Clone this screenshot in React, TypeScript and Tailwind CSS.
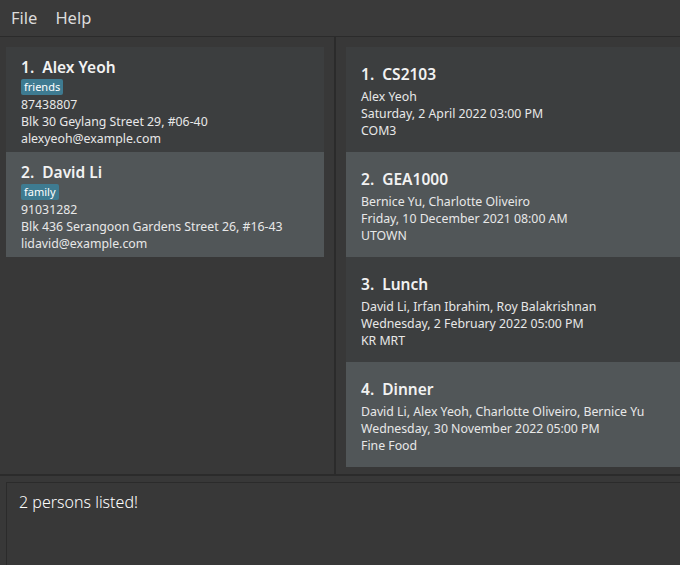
const persons = [
  {
    name: 'Alex Yeoh',
    tag: 'friends',
    phone: '87438807',
    address: 'Blk 30 Geylang Street 29, #06-40',
    email: 'alexyeoh@example.com',
  },
  {
    name: 'David Li',
    tag: 'family',
    phone: '91031282',
    address: 'Blk 436 Serangoon Gardens Street 26, #16-43',
    email: 'lidavid@example.com',
  },
];

const meetings = [
  {
    title: 'CS2103',
    people: 'Alex Yeoh',
    when: 'Saturday, 2 April 2022 03:00 PM',
    where: 'COM3',
  },
  {
    title: 'GEA1000',
    people: 'Bernice Yu, Charlotte Oliveiro',
    when: 'Friday, 10 December 2021 08:00 AM',
    where: 'UTOWN',
  },
  {
    title: 'Lunch',
    people: 'David Li, Irfan Ibrahim, Roy Balakrishnan',
    when: 'Wednesday, 2 February 2022 05:00 PM',
    where: 'KR MRT',
  },
  {
    title: 'Dinner',
    people: 'David Li, Alex Yeoh, Charlotte Oliveiro, Bernice Yu',
    when: 'Wednesday, 30 November 2022 05:00 PM',
    where: 'Fine Food',
  },
];

function PersonCard({ p, index }: { p: (typeof persons)[number]; index: number }) {
  const bg = index % 2 === 0 ? 'bg-[#3c3e3f]' : 'bg-[#515658]';
  return (
    <div className={`${bg} h-[105px] pl-[15px] pt-[9px]`}>
      <div className="text-[15.5px] leading-[22px] font-semibold text-[#f2f2f2]">
        {index + 1}.&nbsp;&nbsp;{p.name}
      </div>
      <div className="flex mt-[1px] mb-[1px]">
        <span className="bg-[#3e7b91] text-white text-[11px] leading-[16px] px-[3px] rounded-[2px]">
          {p.tag}
        </span>
      </div>
      <div className="text-[12.3px] leading-[17px] text-[#e8e8e8]">
        <div>{p.phone}</div>
        <div>{p.address}</div>
        <div>{p.email}</div>
      </div>
    </div>
  );
}

function MeetingCard({ m, index }: { m: (typeof meetings)[number]; index: number }) {
  const bg = index % 2 === 0 ? 'bg-[#3c3e3f]' : 'bg-[#515658]';
  return (
    <div className={`${bg} h-[105px] pl-[15px] pt-[16px] whitespace-nowrap`}>
      <div className="text-[15.5px] leading-[22px] font-semibold text-[#f2f2f2] mb-[3px]">
        {index + 1}.&nbsp;&nbsp;{m.title}
      </div>
      <div className="text-[12.3px] leading-[17px] text-[#e8e8e8]">
        <div>{m.people}</div>
        <div>{m.when}</div>
        <div>{m.where}</div>
      </div>
    </div>
  );
}

export default function App() {
  return (
    <div
      className="w-[680px] h-[565px] bg-[#383838] flex flex-col overflow-hidden"
      style={{ fontFamily: '"Noto Sans", "Open Sans", sans-serif' }}
    >
      {/* Menu bar */}
      <div className="h-[37px] shrink-0 bg-[#3a3a3a] border-b border-[#2b2b2b] flex items-center pl-[11px] gap-[18px] text-[16.5px] text-[#dcdcdc]">
        <span>File</span>
        <span>Help</span>
      </div>

      {/* Lists */}
      <div className="h-[439px] shrink-0 flex border-b-2 border-[#2b2b2b]">
        <div className="w-[334px] shrink-0 pt-[10px] pl-[6px] pr-[10px]">
          {persons.map((p, i) => (
            <PersonCard key={p.name} p={p} index={i} />
          ))}
        </div>
        <div className="w-[2px] shrink-0 bg-[#2b2b2b]" />
        <div className="flex-1 pt-[10px] pl-[10px] overflow-hidden">
          <div className="w-[400px]">
            {meetings.map((m, i) => (
              <MeetingCard key={m.title} m={m} index={i} />
            ))}
          </div>
        </div>
      </div>

      {/* Result display */}
      <div className="flex-1 pt-[6px] pl-[6px]">
        <div className="h-full border border-[#2b2b2b] border-r-0 border-b-0 pl-[12px] pt-[7px] text-[16px] font-light text-white">
          2 persons listed!
        </div>
      </div>
    </div>
  );
}
